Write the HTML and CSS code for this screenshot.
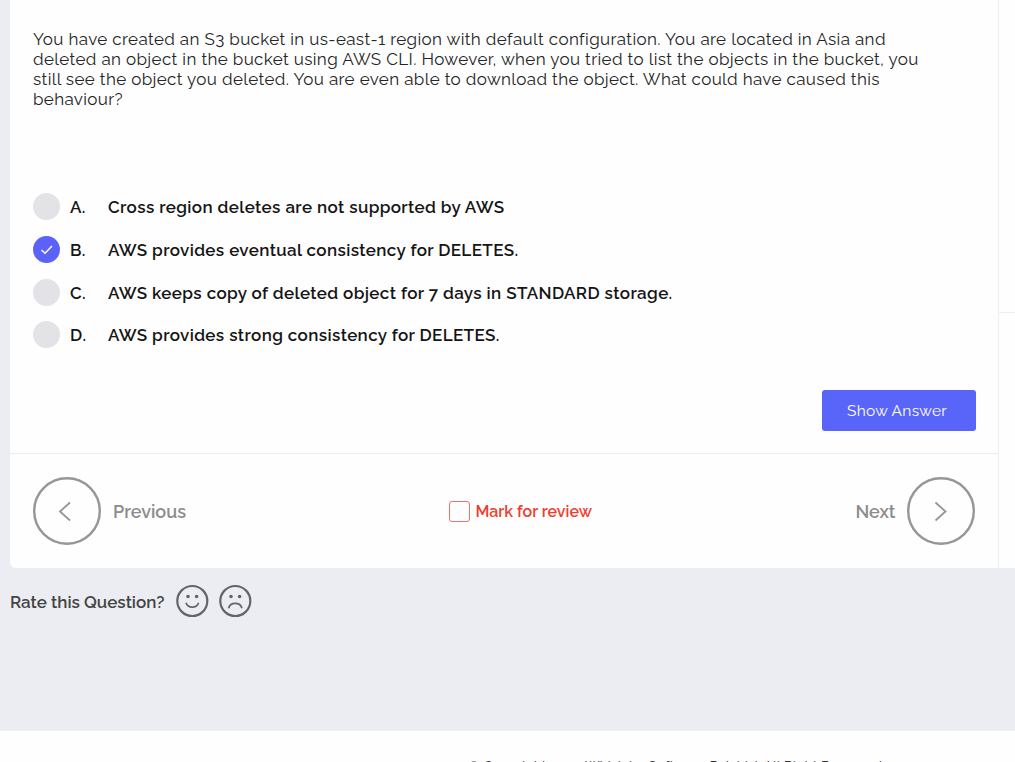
FILE: index.html
```html
<!DOCTYPE html>
<html lang="en">
<head>
<meta charset="utf-8">
<title>Practice question</title>
<link rel="stylesheet" href="styles.css">
</head>
<body>
<main class="workspace">
  <div class="columns">
    <section class="quiz">
      <div class="question-area">
        <p class="question">You have created an S3 bucket in us-east-1 region with default configuration. You are located in Asia and deleted an object in the bucket using AWS CLI. However, when you tried to list the objects in the bucket, you still see the object you deleted. You are even able to download the object. What could have caused this behaviour?</p>
        <ul class="options">
          <li class="option"><span class="radio"></span><span class="letter">A.</span><span>Cross region deletes are not supported by AWS</span></li>
          <li class="option"><span class="radio radio-on"><svg width="12" height="10" viewBox="0 0 12 10"><path d="M0.5 5 4 8.2 11 1"/></svg></span><span class="letter">B.</span><span>AWS provides eventual consistency for DELETES.</span></li>
          <li class="option"><span class="radio"></span><span class="letter">C.</span><span>AWS keeps copy of deleted object for 7 days in STANDARD storage.</span></li>
          <li class="option"><span class="radio"></span><span class="letter">D.</span><span>AWS provides strong consistency for DELETES.</span></li>
        </ul>
        <button class="show-answer">Show Answer</button>
      </div>
      <nav class="pager">
        <a class="step"><svg class="ring" width="68" height="68" viewBox="0 0 68 68"><circle cx="34" cy="34" r="32.8"/><path d="M37 25.5 27 34.5 37 43.5"/></svg><span>Previous</span></a>
        <label class="review"><span class="box"></span><span>Mark for review</span></label>
        <a class="step"><span>Next</span><svg class="ring" width="68" height="68" viewBox="0 0 68 68"><circle cx="34" cy="34" r="32.8"/><path d="M28.5 25.5 38.5 34.5 28.5 43.5"/></svg></a>
      </nav>
    </section>
    <aside class="side"><div class="side-top"></div></aside>
  </div>
  <div class="rating">
    <span class="rate-text">Rate this Question?</span>
    <svg class="face" width="34" height="34" viewBox="0 0 34 34"><circle class="edge" cx="17.3" cy="17" r="15"/><circle class="eye" cx="13" cy="12.5" r="1.8"/><circle class="eye" cx="21.6" cy="12.5" r="1.8"/><path d="M11 18.7C12.8 24.5 21.8 24.5 23.6 18.7"/></svg>
    <svg class="face" width="34" height="34" viewBox="0 0 34 34"><circle class="edge" cx="17.3" cy="17" r="15"/><circle class="eye" cx="13" cy="12.5" r="1.8"/><circle class="eye" cx="21.6" cy="12.5" r="1.8"/><path d="M10.5 24.3C12.5 17.8 22 17.8 24 24.3"/></svg>
  </div>
</main>
<footer class="footer">© Copyright 2020 Whizlabs Software Pvt. Ltd. All Right Reserved.</footer>
</body>
</html>
```
FILE: styles.css
```css
* { box-sizing: border-box; }
body { margin: 0; height: 762px; overflow: hidden; background: #fefefe; color: #222; font-family: Raleway, Lato, sans-serif; }
.workspace { height: 731px; padding-left: 10px; background: #ecedf3; }
.columns { display: flex; height: 568px; background: #fefefe; border-bottom-left-radius: 6px; }
.quiz { width: 989px; border-right: 1px solid #ededf3; }
.question-area { height: 454px; padding: 29px 22px 0 23px; border-bottom: 1px solid #ededf1; display: flex; flex-direction: column; }
.question { margin: 0; width: 900px; height: 157px; font-size: 17px; line-height: 20px; letter-spacing: 0.365px; color: #252525; }
.options { list-style: none; margin: 0; padding: 0; }
.option { display: flex; align-items: center; height: 42.7px; font-size: 17px; font-weight: 600; letter-spacing: 0.375px; color: #151515; white-space: nowrap; }
.radio { display: flex; align-items: center; justify-content: center; width: 27px; height: 27px; margin-bottom: 1px; border-radius: 50%; background: #e2e2e7; }
.radio-on { background: #5b62f7; }
.radio-on path { fill: none; stroke: #fff; stroke-width: 1.5; }
.letter { width: 38px; margin-left: 10px; }
.show-answer { align-self: flex-end; width: 154px; height: 41px; margin: 33px 0 0; padding: 0 4px 0 0; border: 0; border-radius: 3px; background: #5964f9; color: #fff; font: 15.5px Raleway, Lato, sans-serif; letter-spacing: 0.3px; }
.pager { display: flex; align-items: center; justify-content: space-between; height: 114px; padding: 0 22.6px 0 23px; font-weight: 600; }
.step { display: flex; align-items: center; gap: 12px; font-size: 18px; color: #8c8c8c; }
.ring { fill: none; stroke: #969696; stroke-width: 2.4; }
.ring path { stroke-width: 1.8; }
.review { display: flex; align-items: center; gap: 5px; color: #f03d2f; font-size: 16px; }
.box { width: 21px; height: 21px; border: 1px solid #ee7070; border-radius: 3px; }
.side { flex: 1; }
.side-top { height: 313px; border-bottom: 1px solid #ededf3; }
.rating { display: flex; align-items: center; height: 66px; color: #444; font-size: 17px; font-weight: 600; }
.rate-text { width: 165px; padding-top: 2px; white-space: nowrap; }
.face { margin-right: 9px; fill: none; stroke: #656569; stroke-width: 1.7; }
.face .edge { stroke-width: 2.2; }
.face .eye { fill: #656569; stroke: none; }
.footer { height: 31px; padding: 26px 0 0 468px; overflow: hidden; font-size: 14px; line-height: 20px; white-space: nowrap; color: #333; }
```
